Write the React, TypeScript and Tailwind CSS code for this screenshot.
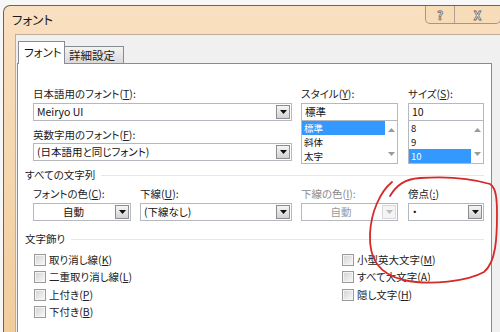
import React from 'react';

const Arrow: React.FC<{ disabled?: boolean }> = ({ disabled }) => (
    <div
        className={
            disabled
                ? 'w-[14px] h-[14px] mr-px flex items-center justify-center border border-[#d9d9d9] bg-[#f4f4f4]'
                : 'w-[14px] h-[14px] mr-px flex items-center justify-center border border-[#8c8c8c] bg-gradient-to-b from-[#f6f6f6] to-[#d2d2d2]'
        }
    >
        <svg width="7" height="4" viewBox="0 0 7 4">
            <path d="M0 0h7L3.5 4z" fill={disabled ? '#bcbcbc' : '#111'} />
        </svg>
    </div>
);

const Combo: React.FC<{ w: string; text: string; center?: boolean; disabled?: boolean }> = ({ w, text, center, disabled }) => (
    <div className={`${w} h-[18px] flex items-center border border-[#b5b8bf] bg-white`}>
        <span
            className={
                (center ? 'flex-1 text-center pr-[2px] ' : 'flex-1 pl-[3px] ') +
                (disabled ? 'text-[#9a9a9a]' : 'text-[#111]')
            }
        >
            {text}
        </span>
        <Arrow disabled={disabled} />
    </div>
);

const Check: React.FC<{ label: string; k: string }> = ({ label, k }) => (
    <div className="h-[17.5px] flex items-center gap-[3px]">
        <div className="w-[12px] h-[12px] border border-[#9a9a9a] bg-[#f4f4f4] p-px">
            <div className="w-full h-full bg-gradient-to-br from-[#d6d6d6] to-[#f6f6f6]" />
        </div>
        <span className="text-[#222]">
            {label}(<span className="underline">{k}</span>)
        </span>
    </div>
);

const ListBox: React.FC<{ w: string; items: string[]; sel: number; hw: string }> = ({ w, items, sel, hw }) => (
    <div className={`${w} h-[43px] flex border border-[#b5b8bf] border-t-0 bg-white`}>
        <div className="flex-1 flex flex-col text-[9.5px] leading-[14px]">
            {items.map((it, i) => (
                <div
                    key={it}
                    className={i === sel ? `${hw} h-[14px] bg-[#3399ff] text-white pl-[2px]` : 'h-[14px] pl-[2px] text-[#111]'}
                >
                    {it}
                </div>
            ))}
        </div>
        <div className="w-[14px] flex flex-col items-center justify-between py-[7px]">
            <svg width="7" height="4" viewBox="0 0 7 4">
                <path d="M0 4h7L3.5 0z" fill="#9a9a9a" />
            </svg>
            <svg width="7" height="4" viewBox="0 0 7 4">
                <path d="M0 0h7L3.5 4z" fill="#9a9a9a" />
            </svg>
        </div>
    </div>
);

const GroupTitle: React.FC<{ text: string }> = ({ text }) => (
    <div className="h-[14px] flex items-center gap-[6px] pr-[7px]">
        <span className="text-[#222]">{text}</span>
        <div className="flex-1 h-px bg-[#e3e6ea]" />
    </div>
);

export default function App() {
    return (
        <div className="relative w-[500px] h-[332px] overflow-hidden bg-[#f7f7f7] pt-[5px] pl-[3px] font-['Noto_Sans_CJK_JP',sans-serif] text-[10.5px] leading-[14px] [font-feature-settings:'palt']">
            <div className="w-[512px] h-[340px] flex flex-col border-l border-t border-[#6e6259] rounded-tl-[7px] bg-gradient-to-b from-[#f9e0c0] to-[#f1cc9c]">
                {/* title bar */}
                <div className="h-[28px] flex items-start">
                    <span className="pl-[8px] pt-[6px] text-[12.5px] leading-[16px] text-[#1b1b1b]">フォント</span>
                    <div className="ml-auto mr-[14px] flex h-[18px] border border-t-0 border-[#a89584] rounded-b-[5px] bg-[#f7dcb9] text-[12px] font-bold leading-[17px] text-white [-webkit-text-stroke:0.8px_#6d6d6d]">
                        <div className="w-[28px] text-center">?</div>
                        <div className="w-[46px] text-center border-l border-[#b3a08f]">X</div>
                    </div>
                </div>
                {/* body */}
                <div className="flex-1 flex">
                    <div className="w-[11px]" />
                    <div className="flex-1 bg-[#f0f0f0] border-l border-t border-[#bfae9c] pt-[6px] pl-px">
                        {/* tabs */}
                        <div className="flex items-end h-[22px] pl-px">
                            <div className="relative z-10 -mb-px w-[47px] h-[23px] border border-b-0 border-[#898c95] bg-white pl-[5px] pt-[3px] text-[11.5px] text-[#111]">
                                フォント
                            </div>
                            <div className="w-[59px] h-[17px] border border-l-0 border-b-0 border-[#898c95] bg-gradient-to-b from-[#f3f3f3] to-[#dadada] pl-[4px] leading-[16px] text-[11.5px] text-[#222]">
                                詳細設定
                            </div>
                        </div>
                        {/* panel */}
                        <div className="w-[475px] h-[280px] border border-[#898c95] bg-white pl-[7px] pt-[23px]">
                            <div className="flex pl-[8px]">
                                <div className="w-[259px] flex flex-col">
                                    <span className="h-[14px] text-[#222]">日本語用のフォント(<span className="underline">T</span>):</span>
                                    <div className="mt-[2px]">
                                        <Combo w="w-[259px]" text="Meiryo UI" />
                                    </div>
                                    <span className="mt-[7px] h-[14px] text-[#222]">英数字用のフォント(<span className="underline">F</span>):</span>
                                    <div className="mt-px">
                                        <Combo w="w-[259px]" text="(日本語用と同じフォント)" />
                                    </div>
                                </div>
                                <div className="w-[97px] ml-[9px] flex flex-col">
                                    <span className="h-[14px] text-[#222]">スタイル(<span className="underline">Y</span>):</span>
                                    <div className="mt-[2px] h-[18px] border border-[#b5b8bf] pl-[3px] leading-[16px] text-[#111]">標準</div>
                                    <ListBox w="w-[97px]" items={['標準', '斜体', '太字']} sel={0} hw="w-[83px]" />
                                </div>
                                <div className="w-[76px] ml-[10px] flex flex-col">
                                    <span className="h-[14px] text-[#222]">サイズ(<span className="underline">S</span>):</span>
                                    <div className="mt-[2px] h-[18px] border border-[#b5b8bf] pl-[3px] leading-[16px] text-[#111]">10</div>
                                    <ListBox w="w-[76px]" items={['8', '9', '10']} sel={2} hw="w-[62px]" />
                                </div>
                            </div>

                            <div className="mt-[4px]">
                                <GroupTitle text="すべての文字列" />
                            </div>
                            <div className="flex pl-[8px] mt-[5px]">
                                <div className="w-[98px] flex flex-col">
                                    <span className="h-[14px] text-[#222]">フォントの色(<span className="underline">C</span>):</span>
                                    <div className="mt-[2px]">
                                        <Combo w="w-[98px]" text="自動" center />
                                    </div>
                                </div>
                                <div className="w-[152px] ml-[9px] flex flex-col">
                                    <span className="h-[14px] text-[#222]">下線(<span className="underline">U</span>):</span>
                                    <div className="mt-[2px]">
                                        <Combo w="w-[152px]" text="(下線なし)" />
                                    </div>
                                </div>
                                <div className="w-[97px] ml-[9px] flex flex-col">
                                    <span className="h-[14px] text-[#8c8c8c]">下線の色(<span className="underline">I</span>):</span>
                                    <div className="mt-[2px]">
                                        <Combo w="w-[97px]" text="自動" center disabled />
                                    </div>
                                </div>
                                <div className="w-[76px] ml-[10px] flex flex-col">
                                    <span className="h-[14px] text-[#222]">傍点(<span className="underline">:</span>)</span>
                                    <div className="mt-[2px]">
                                        <Combo w="w-[76px]" text="・" />
                                    </div>
                                </div>
                            </div>

                            <div className="mt-[11px]">
                                <GroupTitle text="文字飾り" />
                            </div>
                            <div className="flex mt-[5px] pl-[9px]">
                                <div className="w-[308px] flex flex-col">
                                    <Check label="取り消し線" k="K" />
                                    <Check label="二重取り消し線" k="L" />
                                    <Check label="上付き" k="P" />
                                    <Check label="下付き" k="B" />
                                </div>
                                <div className="flex flex-col">
                                    <Check label="小型英大文字" k="M" />
                                    <Check label="すべて大文字" k="A" />
                                    <Check label="隠し文字" k="H" />
                                </div>
                            </div>
                        </div>
                    </div>
                </div>
            </div>

            {/* hand-drawn red circle */}
            <svg className="absolute left-0 top-0 pointer-events-none" width="500" height="332" viewBox="0 0 500 332">
                <path
                    d="M392 182 C380 192 371 212 370 234 C369 258 378 274 404 280 C430 286 468 281 484 272 C496 262 497 238 497 214 C497 198 496 188 490 184 C470 178 448 176 420 178 C404 179 396 186 390 196"
                    fill="none"
                    stroke="#d42a2a"
                    strokeWidth="1.8"
                    strokeLinecap="round"
                />
            </svg>
        </div>
    );
}
